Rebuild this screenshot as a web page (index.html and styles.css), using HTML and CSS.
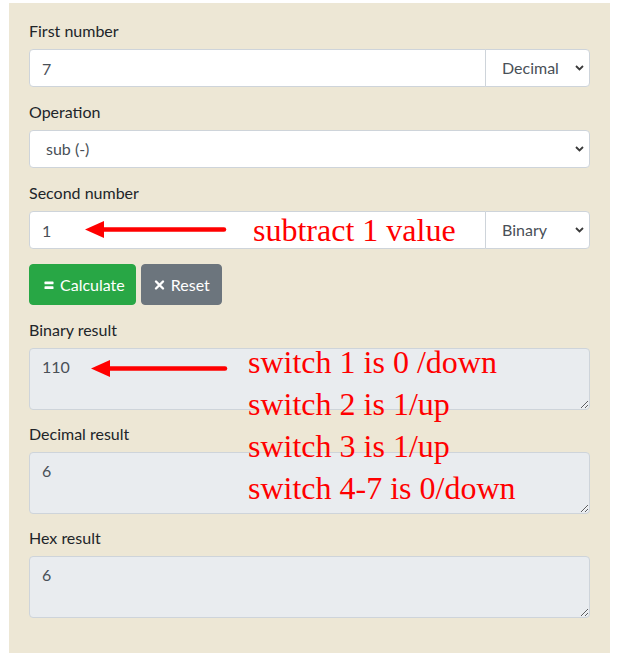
FILE: index.html
```html
<!DOCTYPE html>
<html lang="en">
<head>
<meta charset="utf-8">
<title>Binary calculator</title>
<link rel="stylesheet" href="styles.css">
</head>
<body>
<div class="page">
  <form class="panel">
    <div class="group">
      <label class="lbl">First number</label>
      <div class="igroup">
        <input class="ctl inp" type="text" value="7">
        <div class="sel-wrap sel-side">
          <select class="ctl sel"><option>Decimal</option></select>
          <svg class="chev" width="9" height="6" viewBox="0 0 9 6"><polyline points="1,1 4.5,4.5 8,1" fill="none" stroke="#3a3a3a" stroke-width="1.8"/></svg>
        </div>
      </div>
    </div>
    <div class="group">
      <label class="lbl">Operation</label>
      <div class="sel-wrap">
        <select class="ctl sel sel-full"><option>sub (-)</option></select>
        <svg class="chev" width="9" height="6" viewBox="0 0 9 6"><polyline points="1,1 4.5,4.5 8,1" fill="none" stroke="#3a3a3a" stroke-width="1.8"/></svg>
      </div>
    </div>
    <div class="group">
      <label class="lbl">Second number</label>
      <div class="igroup">
        <input class="ctl inp" type="text" value="1">
        <div class="sel-wrap sel-side">
          <select class="ctl sel"><option>Binary</option></select>
          <svg class="chev" width="9" height="6" viewBox="0 0 9 6"><polyline points="1,1 4.5,4.5 8,1" fill="none" stroke="#3a3a3a" stroke-width="1.8"/></svg>
        </div>
      </div>
    </div>
    <div class="btn-row">
      <button type="button" class="btn btn-green">
        <svg class="ico-eq" width="14" height="16" viewBox="0 0 14 16"><rect x="2.5" y="4.6" width="9" height="2.7" rx="0.6" fill="#fff"/><rect x="2.5" y="9.3" width="9" height="2.7" rx="0.6" fill="#fff"/></svg>
        <span>Calculate</span>
      </button>
      <button type="button" class="btn btn-grey">
        <svg class="ico-x" width="11" height="16" viewBox="0 0 11 16"><path d="M2 4.5 L9 11.5 M9 4.5 L2 11.5" stroke="#fff" stroke-width="2.4" stroke-linecap="round"/></svg>
        <span>Reset</span>
      </button>
    </div>
    <div class="group group-area">
      <label class="lbl">Binary result</label>
      <textarea class="ctl area" rows="2" readonly>110</textarea>
    </div>
    <div class="group group-area">
      <label class="lbl">Decimal result</label>
      <textarea class="ctl area" rows="2" readonly>6</textarea>
    </div>
    <div class="group group-area">
      <label class="lbl">Hex result</label>
      <textarea class="ctl area" rows="2" readonly>6</textarea>
    </div>
  </form>

  <svg class="arrows" width="622" height="663" viewBox="0 0 622 663">
    <line x1="100" y1="229.5" x2="224" y2="229.5" stroke="#ff0000" stroke-width="4.5" stroke-linecap="round"/>
    <polygon points="85,229.5 104,221 104,238" fill="#ff0000"/>
    <line x1="106" y1="368.5" x2="225" y2="368.5" stroke="#ff0000" stroke-width="4.5" stroke-linecap="round"/>
    <polygon points="91,368.5 110,360 110,377" fill="#ff0000"/>
  </svg>
  <div class="note note-sub">subtract 1 value</div>
  <div class="note note-switch">
    <div>switch 1 is 0 /down</div>
    <div>switch 2 is 1/up</div>
    <div>switch 3 is 1/up</div>
    <div>switch 4-7 is 0/down</div>
  </div>
</div>
</body>
</html>
```
FILE: styles.css
```css
* { box-sizing: border-box; }

html, body {
  margin: 0;
  background: #ffffff;
}

body {
  font-family: Lato, "Noto Sans", "Liberation Sans", sans-serif;
  font-size: 16px;
  color: #212529;
}

.page {
  position: relative;
  padding: 3px 12px 10px 9px;
}

.panel {
  background: #ede7d5;
  padding: 16px 20px 23px;
  margin: 0;
}

.group {
  margin-bottom: 13px;
}

.group-area {
  margin-bottom: 12px;
}

.lbl {
  display: block;
  font-size: 16px;
  line-height: 24px;
  margin-bottom: 6px;
  color: #212529;
}

.ctl {
  display: block;
  height: 38px;
  border: 1px solid #ced4da;
  border-radius: 4px;
  padding: 6px 12px;
  font-family: Lato, "Noto Sans", "Liberation Sans", sans-serif;
  font-size: 16px;
  line-height: 24px;
  color: #495057;
  background: #ffffff;
  margin: 0;
  outline: none;
}

.igroup {
  display: flex;
}

.igroup .inp {
  flex: 1;
  min-width: 0;
  border-radius: 4px 0 0 4px;
}

.sel-wrap {
  position: relative;
}

.sel-side {
  width: 105px;
  margin-left: -1px;
}

.sel {
  -webkit-appearance: none;
  appearance: none;
  width: 100%;
  padding-left: 16px;
  padding-right: 24px;
}

.sel-side .sel {
  border-radius: 0 4px 4px 0;
}

.chev {
  position: absolute;
  right: 6px;
  top: 50%;
  margin-top: -3px;
  pointer-events: none;
}

.btn-row {
  display: flex;
  gap: 5px;
  margin-top: 15px;
  margin-bottom: 13px;
}

.btn {
  display: inline-flex;
  align-items: center;
  height: 41px;
  padding: 0 10px 0 12px;
  border: 1px solid transparent;
  border-radius: 4px;
  color: #ffffff;
  font-family: Lato, "Noto Sans", "Liberation Sans", sans-serif;
  font-size: 16px;
  line-height: 24px;
  cursor: pointer;
}

.btn-green {
  background: #28a745;
  border-color: #28a745;
}

.btn-grey {
  background: #6c757d;
  border-color: #6c757d;
  padding: 0 11px 0 12px;
}

.ico-eq {
  margin-right: 4px;
}

.ico-x {
  margin-right: 6px;
}

.area {
  width: 100%;
  height: 62px;
  resize: vertical;
  background: #e9ecef;
}

.arrows {
  position: absolute;
  left: 0;
  top: 0;
  pointer-events: none;
}

.note {
  position: absolute;
  font-family: "Liberation Serif", "Times New Roman", serif;
  font-size: 32px;
  color: #ff0000;
  white-space: nowrap;
}

.note-sub {
  left: 253px;
  top: 214px;
  line-height: 32px;
}

.note-switch {
  left: 248px;
  top: 341px;
  line-height: 42px;
}
```
